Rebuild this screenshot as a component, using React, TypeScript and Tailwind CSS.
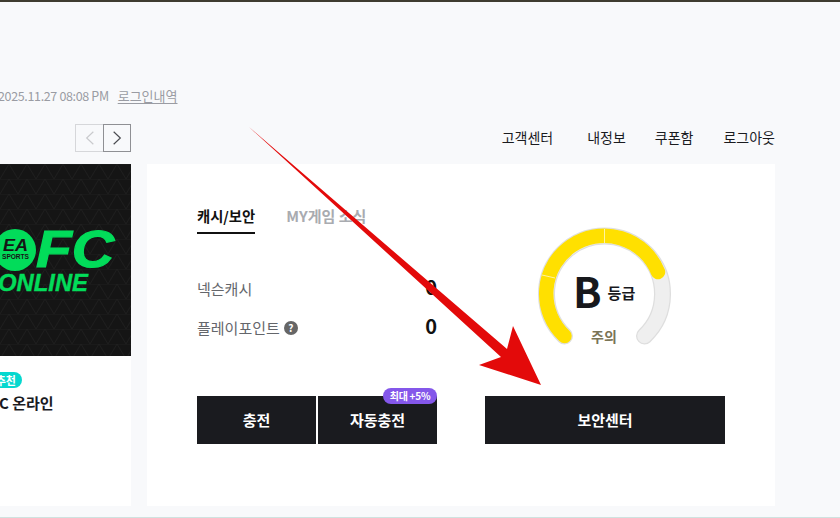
import React from 'react';

const KR = 'font-["Noto_Sans_CJK_KR","Noto_Sans",sans-serif]';

const navLinks = [
  { label: '고객센터', className: '' },
  { label: '내정보', className: 'ml-[34px]' },
  { label: '쿠폰함', className: 'ml-[29px]' },
  { label: '로그아웃', className: 'ml-[30px]' },
];

const FcLogo: React.FC = () => (
  <svg viewBox="0 0 131 192" className="block w-[131px] h-[192px]">
    <defs>
      <pattern id="tri" width="18" height="15" patternUnits="userSpaceOnUse">
        <path d="M0 15L9 0L18 15M0 0H18" fill="none" stroke="#212121" strokeWidth="0.8" />
      </pattern>
    </defs>
    <rect width="131" height="192" fill="#151515" />
    <rect width="131" height="192" fill="url(#tri)" />
    <circle cx="15" cy="86" r="21" fill="#02dc5a" />
    <text x="3" y="87" fontFamily="Liberation Sans" fontSize="17" fontWeight="700" fontStyle="italic" fill="#151515" textLength="25" lengthAdjust="spacingAndGlyphs">EA</text>
    <text x="2" y="95" fontFamily="Liberation Sans" fontSize="8" fontWeight="700" fill="#151515" textLength="27" lengthAdjust="spacingAndGlyphs">SPORTS</text>
    <text x="36" y="103" fontFamily="Liberation Sans" fontSize="52" fontWeight="700" fontStyle="italic" fill="#02dc5a" stroke="#02dc5a" strokeWidth="1.2" textLength="78" lengthAdjust="spacingAndGlyphs">FC</text>
    <text x="-2" y="127" fontFamily="Liberation Sans" fontSize="23" fontWeight="700" fontStyle="italic" fill="#02dc5a" stroke="#02dc5a" strokeWidth="0.4" textLength="90" lengthAdjust="spacingAndGlyphs">ONLINE</text>
  </svg>
);

const Gauge: React.FC = () => (
  <svg viewBox="0 0 140 125" className="block w-[140px] h-[125px]">
    <path d="M29.5 111A58 58 0 1 1 109.5 111" fill="none" stroke="#dedede" strokeWidth="17" strokeLinecap="round" />
    <path d="M29.5 111A58 58 0 1 1 109.5 111" fill="none" stroke="#efefef" strokeWidth="14.5" strokeLinecap="round" />
    <path d="M29.5 111A58 58 0 1 1 123 47" fill="none" stroke="#ffe000" strokeWidth="14.5" strokeLinecap="round" />
    <path d="M69.5 4V18" stroke="#fff3a0" strokeWidth="1" />
    <path d="M7 50L20 53" stroke="#fff3a0" strokeWidth="1" />
  </svg>
);

const App: React.FC = () => {
  return (
    <div className={`relative w-[840px] h-[518px] overflow-hidden bg-[#f8f9fb] ${KR}`}>
      <div className="h-[2px] bg-[#3f3c30]" />

      {/* login info */}
      <div className="mt-[85px] h-[18px] flex items-center whitespace-nowrap leading-[18px] text-[#9a9ca3]">
        <span className="-ml-[2px] text-[12.5px] tracking-[-0.35px]">2025.11.27 08:08 PM</span>
        <span className="ml-[9px] text-[13px] underline underline-offset-2">로그인내역</span>
      </div>

      {/* pager and links */}
      <div className="mt-[19px] h-[28px] flex items-center">
        <div className="ml-[75px] flex">
          <button className="w-[29px] h-[28px] border border-[#d6d7da] flex items-center justify-center">
            <svg viewBox="0 0 12 18" className="w-[10px] h-[16px]"><path d="M10 1.5L2 9l8 7.5" fill="none" stroke="#c9cacd" strokeWidth="1.4" /></svg>
          </button>
          <button className="w-[28px] h-[28px] -ml-[1px] border border-[#8f9094] flex items-center justify-center">
            <svg viewBox="0 0 12 18" className="w-[10px] h-[16px]"><path d="M2 1.5L10 9l-8 7.5" fill="none" stroke="#4a4b50" strokeWidth="1.4" /></svg>
          </button>
        </div>
        <nav className="ml-auto mr-[65px] mb-[2px] flex text-[14px] text-[#1a1b1f]">
          {navLinks.map((link) => (
            <a key={link.label} href="#" className={link.className}>{link.label}</a>
          ))}
        </nav>
      </div>

      {/* cards */}
      <div className="mt-[12px] flex gap-[16px] h-[342px]">
        <div className="w-[131px] bg-white overflow-hidden">
          <FcLogo />
          <span className="block w-[38px] h-[16px] mt-[16px] -ml-[16px] rounded-full bg-[#06d8cf] text-white text-[11px] leading-[16px] font-bold text-right pr-[6px] whitespace-nowrap">
            추천
          </span>
          <p className="mt-[5px] -ml-[1px] text-[15px] font-bold text-[#1a1b1f] leading-[20px] whitespace-nowrap">C 온라인</p>
        </div>

        <div className="w-[628px] bg-white pt-[39px] px-[50px] flex flex-col">
          <div className="flex h-[193px]">
            <div className="w-[240px]">
              <div className="flex gap-[31px] font-bold leading-[24px] whitespace-nowrap">
                <span className="pt-[1px] pb-[4px] text-[14.3px] border-b-2 border-[#111] text-[#111]">캐시/보안</span>
                <span className="pt-[1px] text-[15px] text-[#a9abb0]">MY게임 소식</span>
              </div>
              <div className="mt-[43px] text-[15px] text-[#64666b]">
                <div className="flex justify-between items-center h-[24px]">
                  <span>넥슨캐시</span>
                  <span className="pb-[4px] text-[20px] font-bold text-[#111]">0</span>
                </div>
                <div className="mt-[15px] flex justify-between items-center h-[24px]">
                  <span className="flex items-center gap-[4px]">
                    플레이포인트
                    <span className="w-[14px] h-[14px] rounded-full bg-[#666] text-white text-[10px] leading-[14px] font-bold text-center">?</span>
                  </span>
                  <span className="pb-[4px] text-[20px] font-bold text-[#111]">0</span>
                </div>
              </div>
            </div>
            <div className="relative ml-[98px] mt-[22px] w-[140px] h-[125px]">
              <Gauge />
              <div className="absolute left-[38px] top-[37px] flex items-center gap-[6px] text-[#17181c] font-bold whitespace-nowrap">
                <span className="text-[42px] leading-[56px]">B</span>
                <span className="mt-[6px] text-[15px]">등급</span>
              </div>
              <span className="absolute left-[56px] top-[101px] text-[14px] leading-[20px] font-bold text-[#7a7456]">주의</span>
            </div>
          </div>

          <div className="flex">
            <div className="flex gap-[2px]">
              <button className="w-[119px] h-[48px] bg-[#1a1b1f] text-white text-[15px] font-bold">충전</button>
              <button className="relative w-[119px] h-[48px] bg-[#1a1b1f] text-white text-[15px] font-bold">
                자동충전
                <span className="absolute right-0 -top-[8px] w-[54px] h-[16px] rounded-full bg-[#8457ea] text-white text-[10px] tracking-tight leading-[16px] text-center whitespace-nowrap">최대 +5%</span>
              </button>
            </div>
            <button className="ml-[48px] w-[240px] h-[48px] bg-[#1a1b1f] text-white text-[15px] font-bold">보안센터</button>
          </div>
        </div>
      </div>

      <div className="absolute left-0 right-0 bottom-0 h-[1px] bg-[#cfe2df]" />

      {/* annotation arrow */}
      <svg className="absolute left-0 top-0 pointer-events-none" width="840" height="518" viewBox="0 0 840 518">
        <path d="M249 127L507 349L513 326L541 385L479 365L501 357Z" fill="#e30a0a" />
      </svg>
    </div>
  );
};

export default App;
